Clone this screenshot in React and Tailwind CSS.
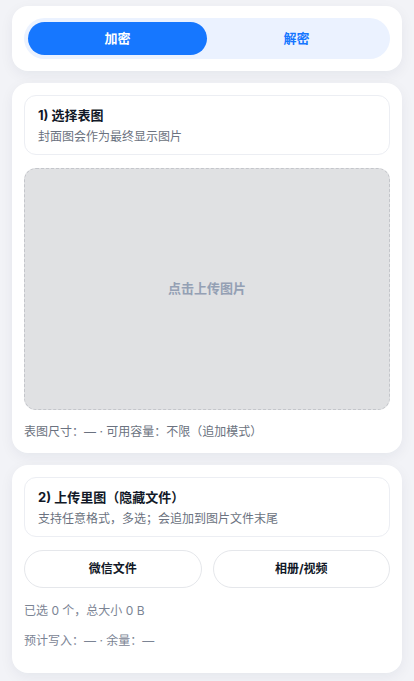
import { useState } from "react";

const font = "font-['Inter','Noto_Sans_CJK_SC',sans-serif]";

function Section({ title, desc }) {
  return (
    <div className="rounded-xl border border-[#eceef3] bg-white px-[13px] pb-[8px] pt-[9px]">
      <p className="text-[13px] font-bold leading-[20px] text-[#111827]">{title}</p>
      <p className="mt-[3px] text-[12px] leading-[18px] text-[#6b7280]">{desc}</p>
    </div>
  );
}

export default function App() {
  const [mode, setMode] = useState("enc");

  return (
    <div className={`min-h-[681px] bg-[#f2f3f7] px-3 pt-[6px] pb-3 ${font}`}>
      {/* mode switch */}
      <div className="rounded-2xl bg-white p-3 shadow-[0_4px_14px_rgba(20,30,60,0.06)]">
        <div className="flex rounded-full bg-[#ebf2ff] p-1">
          <button
            onClick={() => setMode("enc")}
            className={`h-[33px] flex-1 rounded-full text-[13px] font-bold ${
              mode === "enc" ? "bg-[#1677ff] text-white" : "text-[#1677ff]"
            }`}
          >
            加密
          </button>
          <button
            onClick={() => setMode("dec")}
            className={`h-[33px] flex-1 rounded-full text-[13px] font-bold ${
              mode === "dec" ? "bg-[#1677ff] text-white" : "text-[#1677ff]"
            }`}
          >
            解密
          </button>
        </div>
      </div>

      {/* cover image */}
      <div className="mt-3 rounded-2xl bg-white p-3 shadow-[0_4px_14px_rgba(20,30,60,0.06)]">
        <Section title="1) 选择表图" desc="封面图会作为最终显示图片" />
        <div className="mt-[13px] flex h-[242px] items-center justify-center rounded-xl border border-dashed border-[#c4c6cb] bg-[#e0e1e3]">
          <span className="text-[13px] font-bold text-[#94a0b4]">点击上传图片</span>
        </div>
        <p className="mt-[13px] text-[12px] leading-[18px] text-[#6b7280]">
          表图尺寸：— · 可用容量：不限（追加模式）
        </p>
      </div>

      {/* hidden files */}
      <div className="mt-3 rounded-2xl bg-white p-3 pb-[23px] shadow-[0_4px_14px_rgba(20,30,60,0.06)]">
        <Section title="2) 上传里图（隐藏文件）" desc="支持任意格式，多选；会追加到图片文件末尾" />
        <div className="mt-[13px] flex gap-[11px]">
          <button className="h-[38px] flex-1 rounded-full border border-[#e5e7eb] bg-white text-[12px] font-bold text-[#111827]">
            微信文件
          </button>
          <button className="h-[38px] flex-1 rounded-full border border-[#e5e7eb] bg-white text-[12px] font-bold text-[#111827]">
            相册/视频
          </button>
        </div>
        <p className="mt-[14px] text-[12px] leading-[18px] text-[#7b8494]">已选 0 个，总大小 0 B</p>
        <p className="mt-[12px] text-[12px] leading-[18px] text-[#7b8494]">预计写入：— · 余量：—</p>
      </div>
    </div>
  );
}
